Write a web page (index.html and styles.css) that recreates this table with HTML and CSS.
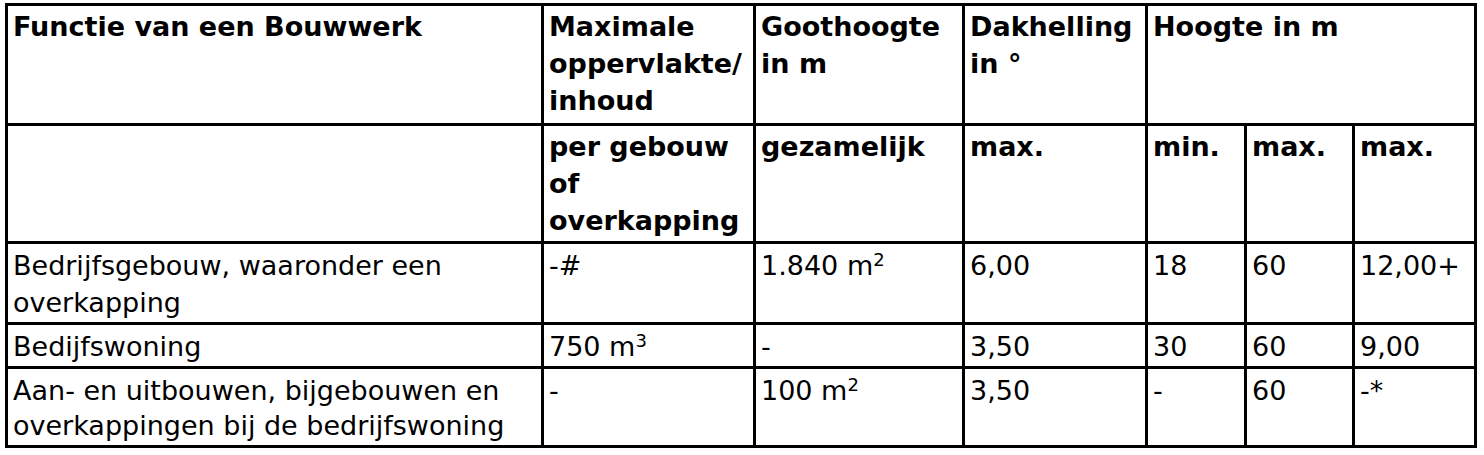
FILE: index.html
```html
<!DOCTYPE html>
<html lang="nl">
<head>
<meta charset="utf-8">
<title>Functie van een Bouwwerk</title>
<link rel="stylesheet" href="styles.css">
</head>
<body>
<div class="grid" role="table">
  <div class="cell head">Functie van een Bouwwerk</div>
  <div class="cell head">Maximale<br>oppervlakte/<br>inhoud</div>
  <div class="cell head">Goothoogte<br>in m</div>
  <div class="cell head">Dakhelling<br>in °</div>
  <div class="cell head span3">Hoogte in m</div>

  <div class="cell head"></div>
  <div class="cell head">per gebouw<br>of<br>overkapping</div>
  <div class="cell head">gezamelijk</div>
  <div class="cell head">max.</div>
  <div class="cell head">min.</div>
  <div class="cell head">max.</div>
  <div class="cell head">max.</div>

  <div class="cell">Bedrijfsgebouw, waaronder een<br>overkapping</div>
  <div class="cell">-#</div>
  <div class="cell">1.840 m<sup>2</sup></div>
  <div class="cell">6,00</div>
  <div class="cell">18</div>
  <div class="cell">60</div>
  <div class="cell">12,00+</div>

  <div class="cell">Bedijfswoning</div>
  <div class="cell">750 m<sup>3</sup></div>
  <div class="cell">-</div>
  <div class="cell">3,50</div>
  <div class="cell">30</div>
  <div class="cell">60</div>
  <div class="cell">9,00</div>

  <div class="cell last">Aan- en uitbouwen, bijgebouwen en<br>overkappingen bij de bedrijfswoning</div>
  <div class="cell last">-</div>
  <div class="cell last">100 m<sup>2</sup></div>
  <div class="cell last">3,50</div>
  <div class="cell last">-</div>
  <div class="cell last">60</div>
  <div class="cell last">-*</div>
</div>
</body>
</html>
```

FILE: styles.css
```css
html, body {
  margin: 0;
  padding: 0;
  background: #fff;
}

body {
  font-family: "DejaVu Sans", sans-serif;
  font-size: 27px;
  line-height: 37px;
  color: #000;
}

.grid {
  display: grid;
  grid-template-columns: 533px 209px 206px 180px 96px 105px 119px;
  grid-template-rows: 117px 115px 78px 41px 76px;
  gap: 3px;
  padding: 3px;
  background: #000;
  width: max-content;
  margin: 3px 0 0 5px;
}

.cell {
  background: #fff;
  padding: 3px 2px 0 5px;
  white-space: nowrap;
  overflow: hidden;
}

.head {
  font-weight: bold;
  padding-top: 2px;
}

.span3 {
  grid-column: span 3;
}

.last {
  padding-top: 4px;
  line-height: 35px;
}

sup {
  font-size: 18px;
  line-height: 0;
  vertical-align: 9px;
}
```
